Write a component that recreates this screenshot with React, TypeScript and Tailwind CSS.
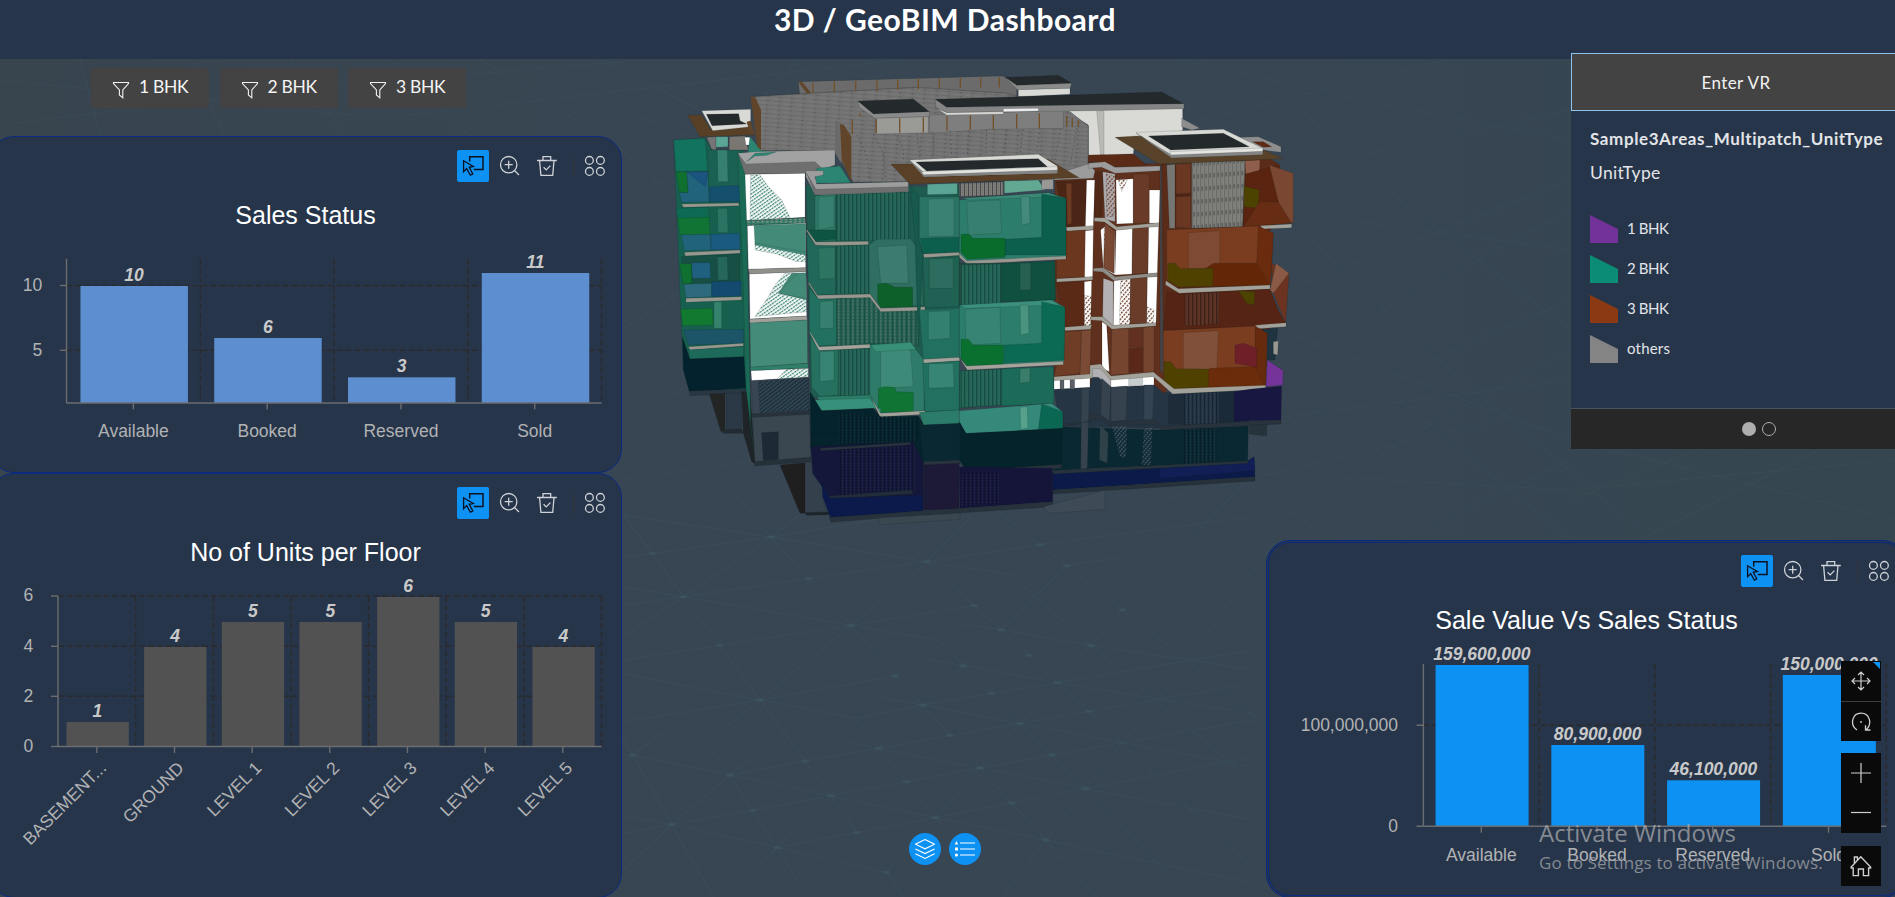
import type { ReactNode } from "react";

type Face = [fill: string, points: string];

/* ---------- 3D scene ---------- */

const gridLines = [
  "190,290 300,436 420,600 555,783 632,887 710,997 800,1117 850,1190",
  "-60,-60 10,45 97,160 190,290",
  "330,-40 453,111 565,236 693,376 827,528 908,615 990,706 1080,804 1175,909 1277,1020 1385,1140 1430,1190",
  "770,50 920,185 1063,317 1143,389 1226,466 1312,548 1407,634 1506,728 1600,820 1900,1110",
  "1130,30 1260,134 1340,197 1423,262 1508,330 1700,480 1960,700",
  "1063,40 920,185 693,376 420,600 262,727",
  "700,-80 453,111 190,290 -20,430",
  "1508,172 1340,197 1245,290 1143,389 1030,497 908,615 777,745 632,887 471,1043 340,1180",
  "1900,-80 1600,235 1508,330 1413,436 1312,548 1201,670 1080,804 947,953 800,1117",
  "1960,130 1600,620 1506,728 1398,866 1277,1020 1150,1190",
  "-20,670 420,600 827,528",
  "-20,485 300,436 693,376 1063,317",
  "-20,320 190,290 565,236 920,185 1260,134 1900,50",
  "-20,175 97,160 453,111 820,50",
  "-20,515 420,600 705,654 777,745 860,845 947,953 1050,1080",
  "-20,255 190,290 693,376 957,421 1030,497 1115,580 1201,670 1296,765 1398,866 1506,973 1700,1190",
  "10,45 453,111 920,185 1172,224 1245,290 1325,359 1413,436 1508,515 1900,850",
  "262,727 329,825 397,931 471,1043 550,1170",
  "0,700 38,765 95,866 155,973 222,1092 280,1190",
  "-20,1140 155,973 329,825 408,760",
  "-20,805 38,765 125,700",
  "38,765 329,825 632,887 947,953 1277,1020 1900,1150",
  "-20,940 155,973 471,1043 800,1117",
  "640,715 777,745 1080,804 1398,866 1900,960",
  "770,590 908,615 1201,670 1506,728 1900,800",
  "900,475 1030,497 1312,548 1600,595 1900,640",
  "1010,370 1143,389 1413,436 1900,510",
  "-20,1005 155,973 397,931 632,887 860,845 1080,804 1296,765 1506,728 1900,660",
  "329,825 555,783 777,745 990,706 1201,670 1407,634 1900,550",
  "705,654 908,615 1115,580 1312,548 1508,515 1900,450",
  "471,1043 710,997 947,953 1175,909 1398,866 1900,770",
];

const gridNodes = [
  [190, 290], [300, 436], [420, 600], [555, 783], [632, 887], [453, 111], [565, 236], [693, 376],
  [827, 528], [908, 615], [1080, 804], [1277, 1020], [920, 185], [1063, 317], [1143, 389], [1226, 466],
  [1312, 548], [1407, 634], [1260, 134], [1340, 197], [1030, 497], [1115, 580], [1201, 670], [1296, 765],
  [1398, 866], [777, 745], [947, 953], [1175, 909], [97, 160], [155, 973], [471, 1043], [800, 1117],
  [329, 825], [397, 931], [38, 765], [710, 997], [860, 845], [990, 706], [1413, 436], [1508, 330],
];

const farLines = [
  "0,80 380,118 900,60", "80,59 100,136", "190,59 225,136", "290,59 345,136", "390,59 470,136 622,270",
  "0,125 300,88 622,62", "480,59 622,150 780,290 900,390", "622,200 700,160 800,59", "622,330 760,240",
  "622,110 700,140 1000,170", "600,59 700,110", "1180,59 1360,100 1571,140", "1200,120 1450,59",
  "1260,300 1571,180", "1290,100 1400,200 1571,330", "1270,210 1571,250", "1250,380 1420,290 1571,210",
  "1240,450 1360,390 1571,300", "1300,230 1450,370 1640,530", "1260,420 1571,380", "1280,330 1571,440 1895,520",
  "1200,470 1571,490 1895,460", "1340,160 1571,110", "1250,540 1420,430 1571,350", "1400,540 1571,460",
  "1640,540 1820,449", "1571,500 1700,449", "622,420 700,380 640,350", "622,480 760,460", "1160,500 1500,420",
  "1230,470 1330,540", "1400,400 1571,540",
];

const leftWing: Face[] = [
  ["#17604f", "101,420 195,415 215,450 310,450 330,1170 148,1170 130,1110 118,840"],
  ["#12745e", "101,420 195,415 203,512 108,515"],
  ["#1b6153", "203,450 300,450 305,610 208,608"],
  ["#37806f", "232,450 262,450 264,545 234,545"],
  ["#0f7030", "108,515 140,515 145,578 118,575"],
  ["#22637c", "140,515 203,515 208,605 125,607 118,578 145,578"],
  ["#1c5480", "140,515 203,515 196,560"],
  ["#14506e", "208,560 300,556 303,605 208,605"],
  ["#999890", "125,612 296,609 298,617 130,622"],
  ["#0e6a52", "108,625 205,622 208,655 112,658"],
  ["#117434", "112,655 207,652 210,703 120,705"],
  ["#22637c", "125,705 210,703 213,750 133,752"],
  ["#1a5a80", "213,703 298,700 300,748 213,750"],
  ["#2b7463", "232,625 262,625 264,698 234,698"],
  ["#999890", "133,757 300,750 300,760 136,768"],
  ["#174f45", "125,770 300,762 300,850 130,850"],
  ["#0f7030", "118,790 155,792 155,850 130,852"],
  ["#1f5f80", "155,788 210,788 212,835 157,835"],
  ["#2d6a7d", "132,853 215,850 215,890 138,893"],
  ["#25685a", "232,770 262,770 264,840 234,840"],
  ["#144a70", "215,845 303,843 303,888 215,890"],
  ["#999890", "138,895 305,890 305,900 138,907"],
  ["#127a30", "122,928 217,925 220,975 128,977"],
  ["#1c5468", "130,990 310,988 310,1030 145,1035"],
  ["#35836c", "222,905 245,905 245,985 222,985"],
  ["#999890", "145,1040 310,1030 310,1038 150,1050"],
  ["#1e6a5a", "145,1050 310,1040 310,1070 148,1077"],
  ["#04222e", "127,1010 150,1077 312,1070 318,1165 148,1175 130,1110"],
  ["#2a3742", "148,1173 318,1167 320,1180 150,1187"],
  ["#232525", "208,1182 255,1180 255,1290 243,1295"],
  ["#2b3947", "258,1180 305,1180 305,1290 258,1290"],
  ["#232b33", "243,1290 305,1287 310,1300 250,1300"],
  ["#1f2428", "305,1175 330,1175 345,1390 335,1385 310,1300"],
];

const stair: Face[] = [
  ["#1a6a56", "293,460 318,515 332,1270 345,1390 318,1165 308,800"],
  ["#ffffff", "315,523 495,519 495,652 320,662"],
  ["url(#dither)", "332,525 360,525 385,560 425,600 450,652 330,661"],
  ["#2f7a66", "318,662 495,653 497,672 320,677"],
  ["url(#speck)", "318,662 495,653 497,668 320,674"],
  ["#ffffff", "322,677 497,670 497,803 325,808"],
  ["#448a79", "342,676 497,671 497,765 430,752 345,735"],
  ["url(#dither)", "345,728 430,745 497,755 497,785 470,785 410,762 345,750"],
  ["#8f9189", "325,808 498,803 498,815 328,822"],
  ["#ffffff", "328,822 498,815 500,948 330,957"],
  ["#448a79", "455,820 498,818 500,900 415,880"],
  ["url(#dither)", "435,820 470,822 415,880 500,895 500,935 345,950 385,890 405,855"],
  ["#a3a29a", "328,958 500,948 502,960 330,970"],
  ["#458b7a", "330,969 502,960 503,1090 332,1102"],
  ["#2f7f69", "330,1102 505,1090 505,1104 332,1112"],
  ["#ffffff", "333,1112 505,1105 505,1132 335,1142"],
  ["url(#dither)", "440,1108 505,1105 505,1130 410,1138"],
  ["#3a4553", "333,1142 505,1132 508,1232 340,1242"],
  ["url(#ditherDark)", "355,1145 505,1134 508,1230 360,1238"],
  ["#28323c", "335,1242 508,1232 508,1245 340,1255"],
  ["#3a4650", "338,1252 508,1243 512,1375 345,1388"],
  ["#1d2a36", "365,1298 415,1295 415,1378 370,1382"],
  ["#27313a", "340,1385 512,1372 512,1385 345,1398"],
  ["#201f1f", "420,1395 495,1388 495,1540 480,1540"],
  ["#34414d", "495,1388 515,1385 560,1535 495,1540"],
  ["#1d242a", "495,1538 565,1536 568,1544 500,1546"],
];

const frontBlock: Face[] = [
  ["#1d5c4e", "498,555 958,560 958,1240 512,1190"],
  ["#2d7867", "525,587 587,582 587,722 525,722"],
  ["#37806f", "535,592 582,588 582,680 535,690"],
  ["url(#slats)", "587,582 810,575 810,720 587,722"],
  ["#0d5442", "498,690 525,722 587,718 587,690"],
  ["#999890", "498,690 502,690 528,726 685,724 685,734 528,738"],
  ["#22685a", "500,700 525,735 587,738 587,883 530,885 505,850"],
  ["#2e7463", "535,745 585,742 585,835 538,838"],
  ["url(#slats)", "587,738 695,735 690,880 587,883"],
  ["#2f6f62", "687,735 710,718 812,717 848,765 848,915 722,925 688,880"],
  ["#3b7c6f", "712,740 800,735 805,850 722,850"],
  ["#0c6028", "713,852 740,850 765,862 818,862 818,920 722,922 713,905"],
  ["#999890", "504,848 508,848 532,886 690,882 722,925 855,920 855,932 720,937 688,893 535,897"],
  ["#227060", "508,865 535,898 590,897 590,1035 535,1037 508,1000"],
  ["#37806f", "540,905 580,902 580,985 540,985"],
  ["url(#slatsLight)", "590,895 690,893 722,935 835,932 835,1035 690,1030 590,1037"],
  ["#a5a49c", "508,995 512,998 538,1040 690,1033 690,1044 536,1052"],
  ["#25705f", "512,1010 538,1052 595,1050 595,1185 540,1190 515,1160"],
  ["#388473", "540,1055 582,1053 582,1140 540,1145"],
  ["url(#slats)", "595,1050 692,1045 692,1185 595,1187"],
  ["#2f7b69", "690,1035 812,1027 852,1080 852,1232 722,1240 690,1190"],
  ["#3d8a79", "722,1042 800,1035 812,1055 820,1160 722,1165"],
  ["#389079", "692,1035 812,1027 828,1048 708,1055"],
  ["#107435", "715,1165 735,1160 765,1162 768,1175 820,1177 820,1235 722,1237 715,1222"],
  ["#2b7c68", "530,1190 690,1185 700,1200 540,1203"],
  ["#37907a", "520,1200 690,1195 722,1240 722,1225 545,1232"],
  ["#05232c", "510,1175 545,1232 700,1225 722,1250 835,1248 852,1275 852,1395 820,1332 512,1345"],
  ["#05232c", "512,1300 850,1300 850,1345 545,1345"],
  ["#a5a49c", "692,1190 722,1240 855,1232 855,1243 720,1250"],
  ["#15173a", "512,1340 820,1325 850,1390 850,1490 570,1495 518,1420"],
  ["url(#slatsDark)", "595,1240 830,1255 830,1325 595,1335"],
  ["url(#slatsDark)", "600,1350 825,1335 825,1475 600,1485"],
  ["#28333d", "540,1345 810,1327 812,1334 542,1352"],
  ["#222c3a", "565,1488 815,1470 820,1482 570,1497"],
  ["#0b1a4a", "545,1450 570,1495 850,1485 850,1532 572,1555 548,1490"],
  ["#17594c", "810,555 838,590 838,720 850,770 835,1040 825,720"],
  ["#2a7464", "838,590 958,590 958,755 850,760 838,720"],
  ["#3a8174", "865,597 942,595 942,708 865,710"],
  ["#5aa593", "862,553 952,550 952,582 862,584"],
  ["#0d5f4d", "840,715 958,712 958,757 850,760"],
  ["#999890", "850,762 958,757 960,766 852,773"],
  ["#1f6152", "848,775 958,770 958,920 855,922"],
  ["#2d6d5f", "868,778 940,775 940,865 868,865"],
  ["#227060", "838,930 958,925 958,1072 850,1078"],
  ["#348070", "865,935 930,932 930,1015 865,1020"],
  ["#a5a49c", "850,1078 958,1072 960,1082 852,1090"],
  ["#22705f", "848,1090 958,1083 958,1230 855,1235"],
  ["#378574", "866,1092 940,1090 942,1162 866,1165"],
  ["#2b7c68", "838,1237 958,1230 958,1272 850,1275"],
  ["#0a2832", "835,1250 850,1275 958,1270 958,1382 850,1385"],
  ["#28333d", "850,1385 958,1380 960,1390 852,1395"],
  ["#1d1a38", "850,1395 958,1390 958,1528 850,1530"],
  ["#2c7d6b", "958,600 1225,578 1278,595 1278,775 978,785 958,760"],
  ["#3b8877", "965,595 1225,578 1260,590 985,600"],
  ["#378070", "980,605 1080,600 1085,700 985,705"],
  ["#0b5f4c", "1205,582 1278,595 1278,765 1095,765 1095,718 1205,712"],
  ["#448a7a", "1143,590 1168,590 1170,670 1145,675"],
  ["#0a6c2c", "963,703 985,702 1000,715 1095,715 1095,772 982,778 963,757"],
  ["#999890", "958,760 980,782 1278,768 1278,778 982,793 958,772"],
  ["#1e4c42", "958,790 1090,790 1085,915 958,920"],
  ["url(#slats)", "965,795 1085,792 1085,910 965,915"],
  ["#0f5040", "1085,790 1245,783 1247,900 1085,905"],
  ["#276050", "1140,790 1172,788 1172,870 1140,870"],
  ["#2c7d6b", "958,918 1235,900 1275,922 1272,1085 980,1098 958,1070"],
  ["#3a907c", "958,915 1235,900 1260,915 975,925"],
  ["#378472", "975,928 1080,922 1082,1030 978,1035"],
  ["#0b6a53", "1205,905 1275,922 1272,1080 1092,1088 1092,1035 1205,1030"],
  ["#4a937f", "1140,915 1165,915 1167,1000 1142,1005"],
  ["#0a7030", "963,1018 985,1018 1000,1035 1090,1035 1090,1092 982,1098 963,1075"],
  ["#a5a49c", "958,1073 980,1098 1270,1084 1270,1094 982,1110"],
  ["#1d5c4e", "960,1112 1090,1108 1085,1215 958,1225"],
  ["url(#slats)", "965,1112 1085,1108 1085,1215 965,1222"],
  ["#1b6b58", "1085,1106 1240,1100 1242,1210 1085,1218"],
  ["#3a7d6b", "1140,1106 1170,1104 1170,1145 1140,1150"],
  ["#35897a", "958,1232 1235,1210 1268,1235 1268,1285 978,1302 958,1265"],
  ["#0a6752", "1205,1212 1268,1235 1268,1285 1195,1288"],
  ["#56a08c", "1140,1222 1162,1220 1164,1285 1142,1288"],
  ["#04232a", "958,1265 978,1300 1267,1285 1265,1395 980,1412 958,1380"],
  ["#28333d", "958,1385 980,1412 1265,1393 1265,1405 982,1422"],
  ["#15153a", "958,1400 1238,1405 1238,1505 960,1525"],
  ["url(#slatsDark)", "965,1420 1078,1420 1078,1510 965,1518"],
  ["#27323c", "568,1552 958,1525 1238,1505 1238,1520 720,1555 572,1567"],
  ["#3a4650", "715,1553 960,1540 960,1558 718,1575"],
  ["#3e4a55", "1210,1520 1395,1470 1395,1528 1238,1540 1225,1538"],
];

const brownWing: Face[] = [
  ["#5f301d", "225,390 330,380 345,345 560,340 560,1030 222,1000"],
  ["#4b2616", "228,395 320,390 318,525 258,530"],
  ["#6d3a22", "258,400 275,400 275,520 262,525"],
  ["#ffffff", "320,390 345,390 340,530 316,533"],
  ["#a3a29a", "258,532 340,527 340,539 260,544"],
  ["#6b371f", "232,545 318,540 318,680 230,685"],
  ["#ffffff", "316,542 340,540 338,680 314,682"],
  ["#a3a29a", "230,686 338,680 338,690 230,696"],
  ["#5a2a17", "228,700 313,695 313,830 255,828"],
  ["#ffffff", "313,695 335,692 332,828 313,830"],
  ["url(#ditherBrown)", "313,735 335,740 332,828 313,830"],
  ["#a3a29a", "252,832 335,825 332,838 255,842"],
  ["#6f3c26", "255,845 305,842 300,970 222,980"],
  ["#7a4a34", "305,842 333,840 330,975 300,975"],
  ["#4f2818", "345,365 370,365 365,505 343,505"],
  ["#adabae", "368,365 405,372 405,515 375,508"],
  ["url(#ditherBrown)", "378,372 425,385 400,500 380,500"],
  ["#ffffff", "408,390 460,386 460,520 410,522"],
  ["url(#ditherBrown)", "415,390 442,390 425,425"],
  ["#683a27", "460,372 508,372 508,520 460,520"],
  ["#ffffff", "508,420 540,420 537,520 508,520"],
  ["#a3a29a", "343,503 375,503 410,530 537,518 537,531 408,541 373,516 343,514"],
  ["#ffffff", "362,540 374,530 405,545 405,675 370,655"],
  ["#7b4934", "375,520 405,545 402,670 370,655"],
  ["url(#ditherBrown)", "372,530 402,550 402,670 372,650"],
  ["#ffffff", "408,541 458,536 456,672 405,675"],
  ["#693b29", "458,536 506,532 504,670 456,672"],
  ["#ffffff", "506,532 536,530 532,670 504,672"],
  ["#8f8d88", "340,655 370,653 405,680 532,668 532,680 402,692 368,666 340,664"],
  ["#b4b1b5", "370,685 400,695 400,828 368,800"],
  ["#ffffff", "402,692 452,686 450,824 400,828"],
  ["url(#ditherBrown)", "422,692 452,688 450,824 418,826"],
  ["#693b29", "452,686 502,682 500,820 450,822"],
  ["#ffffff", "502,682 532,680 528,820 500,822"],
  ["url(#ditherBrown)", "500,770 522,780 520,820 500,820"],
  ["#a3a29a", "333,800 368,800 398,826 528,818 528,828 396,838 365,812 333,810"],
  ["#ffffff", "366,815 380,825 388,965 366,955"],
  ["#75452f", "396,838 522,830 522,965 392,975"],
  ["#613020", "446,836 490,834 490,890 446,892"],
  ["#5a2818", "446,895 490,892 490,965 446,968"],
  ["#454345", "540,345 560,345 560,985 540,960"],
  ["#5b2b19", "545,345 860,320 900,345 895,500 860,560 870,840 550,860"],
  ["#767672", "560,345 585,343 585,535 568,535"],
  ["#6a3722", "588,342 632,340 632,535 588,532"],
  ["#4e2516", "588,432 632,430 632,438 588,440"],
  ["#7f807c", "635,337 795,332 788,530 635,535"],
  ["url(#perf)", "638,337 795,332 788,530 638,535"],
  ["#8f5e4c", "795,332 840,330 838,372 797,372"],
  ["#5a2410", "797,372 895,345 895,455 838,460 790,530"],
  ["#7a4832", "868,345 940,370 940,520 895,500 895,455"],
  ["#4d4300", "792,408 838,420 835,475 792,470"],
  ["#662d14", "838,455 895,455 935,520 860,525 790,530"],
  ["#a3a29a", "840,527 935,522 935,533 850,537"],
  ["#7a3d20", "560,540 835,528 880,550 872,705 595,712 560,690"],
  ["#7e4a33", "625,548 720,542 720,652 625,658"],
  ["#6b2b0e", "835,530 880,550 872,700 830,640"],
  ["#632708", "595,712 700,640 830,640 872,705"],
  ["#4f4100", "563,640 585,640 602,656 700,655 698,708 598,712 563,692"],
  ["#a3a29a", "558,692 595,716 870,705 870,717 598,730 556,704"],
  ["#552414", "562,725 598,732 870,718 895,780 917,820 830,830 550,840"],
  ["#6b3320", "875,640 927,670 917,820 880,730"],
  ["#8a5a47", "870,720 888,640 927,670 880,730"],
  ["url(#slatsBrown)", "615,732 718,727 715,822 615,828"],
  ["#4d4300", "775,722 825,725 822,765 800,760"],
  ["#a3a29a", "825,826 918,818 918,830 835,836"],
  ["#1f3340", "845,838 893,835 885,930 860,930"],
  ["#9a9890", "880,875 895,873 893,915 880,912"],
  ["#7a3d20", "550,842 825,828 862,850 857,1008 582,1020 550,990"],
  ["#80503a", "610,848 715,842 710,968 610,970"],
  ["#662a0e", "825,830 862,850 857,1005 825,960"],
  ["#6a2c0a", "582,1020 690,955 825,950 857,1008"],
  ["#6e1f27", "765,885 790,880 830,895 830,952 765,940"],
  ["#4f4100", "552,935 572,935 588,956 685,957 685,1010 582,1018 552,992"],
  ["#74349a", "862,930 910,962 908,1005 858,1010"],
];

const podium: Face[] = [
  ["#263544", "222,265 330,260 335,225 365,235 392,260 522,255 550,278 808,265 808,375 545,385 240,378"],
  ["#ffffff", "222,240 330,233 330,262 222,268"],
  ["#5a6066", "240,240 252,240 252,268 240,268"],
  ["#5a6066", "270,238 284,238 284,266 270,266"],
  ["#b2b0b3", "335,198 360,200 393,240 393,262 355,232 335,232"],
  ["#ffffff", "393,238 522,228 522,255 393,262"],
  ["#c8cdcd", "446,235 488,232 488,256 446,258"],
  ["#a3a29a", "222,230 330,222 330,196 362,192 393,228 520,216 582,266 857,256 857,268 578,282 520,230 393,240 360,206 338,206 338,234 222,242"],
  ["#1f2d3a", "565,285 610,282 610,372 565,372"],
  ["url(#slatsDark)", "612,282 712,277 712,370 612,375"],
  ["#1b2a38", "718,278 760,276 760,365 718,368"],
  ["#181742", "762,275 808,268 905,258 903,360 808,362 762,365"],
  ["#0a2832", "240,380 540,390 805,378 803,485 335,505 220,512"],
  ["#36434f", "305,265 328,264 322,505 302,508"],
  ["#36434f", "365,235 393,260 388,365 362,345"],
  ["#36434f", "393,262 442,258 438,360 393,365"],
  ["#334352", "492,255 522,255 518,360 492,360"],
  ["#2f4149", "360,375 385,400 382,490 358,480"],
  ["url(#ditherGrey)", "395,378 442,376 438,475 420,470"],
  ["url(#ditherGrey)", "492,385 518,380 512,495 485,495"],
  ["url(#slatsDark)", "612,388 708,384 708,488 612,492"],
  ["#28333d", "250,370 330,366 330,343 360,343 390,368 518,358 545,378 903,360 903,372 545,390 518,372 388,378 360,356 250,380"],
  ["#27333c", "808,375 860,372 860,408 808,402"],
  ["#0b1a48", "218,520 800,485 822,470 825,530 218,570"],
  ["#111f56", "540,505 800,488 822,470 825,512 540,535"],
  ["#27333c", "220,512 805,482 805,490 222,522"],
  ["#26313b", "218,570 825,530 825,543 218,582"],
];

const roofs: Face[] = [
  ["#6b6b6b", "475,245 1085,228 1130,240 1130,290 480,290"],
  ["#24292c", "1095,232 1255,226 1295,250 1130,256"],
  ["#8a8a8a", "1095,232 1130,256 1295,250 1290,265 1133,270"],
  ["#d9dad5", "1135,269 1290,265 1290,283 1135,290"],
  ["#d9dad5", "1270,330 1628,325 1628,392 1485,412 1480,462 1345,470 1345,375"],
  ["#b9bab6", "1370,332 1392,332 1392,465 1382,465"],
  ["#737373", "332,290 830,262 1100,280 1290,335 1345,378 1345,498 1240,540 640,547 585,452 362,452"],
  ["url(#brick)", "332,290 830,262 1100,280 1290,335 1345,378 1345,498 1240,540 640,547 585,452 362,452"],
  ["#7e7e7e", "868,345 1270,330 1270,385 1050,388 868,400"],
  ["#24292c", "885,298 1565,276 1632,312 1365,315 920,322"],
  ["#858585", "885,298 920,322 1365,314 1632,311 1632,326 1360,332 920,338 888,322"],
  ["#d9dad5", "890,325 920,338 1090,335 1090,342 920,345"],
  ["#eeeeee", "1090,326 1195,325 1195,333 1090,335"],
  ["#24292c", "653,303 820,297 868,335 700,342"],
  ["#8a8a8a", "653,303 700,342 868,335 868,350 705,355 658,322"],
  ["#9a9a96", "708,355 865,350 865,398 708,402"],
  ["#574026", "143,345 185,345 212,388 325,380 345,405 180,410"],
  ["#d9dad5", "185,332 332,328 332,380 218,392"],
  ["#24292c", "199,343 296,341 300,362 320,372 216,377"],
  ["#757575", "200,412 228,410 228,450 215,448"],
  ["#5aa593", "228,410 264,410 264,440 228,442"],
  ["#7a7672", "268,410 315,408 325,450 268,450"],
  ["#ffffff", "314,412 330,412 330,435 318,435"],
  ["#2b8572", "330,410 365,452 408,455 320,485"],
  ["#a2a2a2", "293,460 345,455 585,450 585,495 545,510 525,490 318,500"],
  ["#2b8572", "320,485 345,460 408,456 380,466 345,468"],
  ["#6f6f6f", "293,460 318,492 525,485 548,507 500,520 315,522"],
  ["#2b8572", "530,505 600,498 632,548 525,550"],
  ["#9d9d9d", "498,512 550,512 550,525 525,530 530,552 805,545 805,575 525,585 498,530"],
  ["#6f6f6f", "500,520 528,568 805,560 805,575 525,585"],
  ["#807c78", "958,550 1090,545 1090,585 958,590"],
  ["url(#slatsDark)", "958,550 1090,545 1090,585 958,590"],
  ["#63a893", "1093,543 1195,540 1215,570 1093,580"],
  ["#9a9896", "1205,540 1240,538 1240,568 1205,568"],
  ["#9c9c9c", "1270,515 1345,492 1365,512 1360,535 1240,540"],
  ["#5a2a16", "1345,465 1480,462 1520,495 1420,500 1365,485 1345,490"],
  ["#9c9c9c", "1345,490 1395,485 1425,502 1560,498 1560,512 1425,520 1385,502 1345,505"],
  ["#5a4026", "752,492 815,492 1225,478 1318,533 810,553"],
  ["#d9dad5", "808,480 1195,463 1252,498 1252,520 852,530"],
  ["#858585", "808,480 852,518 1252,505 1252,520 852,530"],
  ["#e4e5e0", "845,515 1252,500 1252,510 850,524"],
  ["#24292c", "828,486 1195,476 1222,500 860,513"],
  ["#8d8d8d", "1625,355 1680,385 1655,390 1625,380"],
  ["#8d8d8d", "1800,412 1855,410 1923,440 1923,457 1870,450"],
  ["#5e2a14", "1838,425 1870,425 1895,440 1870,442"],
  ["#584229", "1425,412 1490,408 1870,450 1932,476 1560,492 1545,485"],
  ["#d9dad5", "1488,397 1750,388 1868,445 1868,462 1595,472"],
  ["#858585", "1488,400 1590,462 1868,452 1868,464 1595,474"],
  ["#e4e5e0", "1590,455 1868,444 1868,454 1592,465"],
  ["#24292c", "1525,408 1750,400 1828,440 1592,450"],
];

const posts = [
  [519, 248, 280], [583, 244, 277], [647, 243, 274], [711, 240, 272], [773, 238, 270], [835, 236, 268],
  [898, 235, 266], [961, 234, 264], [1022, 232, 262], [1078, 232, 262], [637, 358, 402], [660, 340, 350],
  [709, 358, 400], [779, 355, 398], [850, 352, 397], [921, 348, 392], [991, 346, 390], [1060, 345, 388],
  [1130, 342, 386], [1198, 340, 384], [1280, 348, 380], [1297, 355, 382], [1315, 360, 378],
];

function Faces({ items }: { items: Face[] }) {
  return (
    <g stroke="#0b1a1c" strokeOpacity="0.22" strokeWidth="2">
      {items.map(([fill, points], i) => (
        <polygon key={i} fill={fill} points={points} />
      ))}
    </g>
  );
}

function Scene() {
  return (
    <svg className="absolute inset-0 h-full w-full" viewBox="0 0 1895 897" preserveAspectRatio="none" aria-hidden="true">
      <defs>
        <pattern id="dither" width="9" height="9" patternUnits="userSpaceOnUse" patternTransform="rotate(-35)">
          <rect width="7" height="4" fill="#3f8674" />
        </pattern>
        <pattern id="ditherDark" width="9" height="9" patternUnits="userSpaceOnUse" patternTransform="rotate(-38)">
          <rect width="8" height="4" fill="#0c2c35" />
        </pattern>
        <pattern id="ditherBrown" width="9" height="10" patternUnits="userSpaceOnUse" patternTransform="rotate(-50)">
          <rect width="6" height="4" fill="#74452f" />
        </pattern>
        <pattern id="ditherGrey" width="8" height="9" patternUnits="userSpaceOnUse" patternTransform="rotate(-50)">
          <rect width="6" height="4" fill="#4b5a68" />
        </pattern>
        <pattern id="speck" width="14" height="8" patternUnits="userSpaceOnUse">
          <rect width="8" height="4" fill="#8f9189" />
        </pattern>
        <pattern id="slats" width="12" height="20" patternUnits="userSpaceOnUse">
          <rect width="12" height="20" fill="#27675a" />
          <rect width="4" height="20" fill="#164d42" />
        </pattern>
        <pattern id="slatsLight" width="14" height="10" patternUnits="userSpaceOnUse">
          <rect width="14" height="10" fill="#256053" />
          <rect width="4" height="10" fill="#184f44" />
          <rect x="7" width="2.5" height="7" fill="#8f9189" fillOpacity="0.7" />
        </pattern>
        <pattern id="slatsDark" width="12" height="9" patternUnits="userSpaceOnUse">
          <rect width="3" height="9" fill="#0a1420" fillOpacity="0.5" />
          <rect x="6" width="2" height="5" fill="#45566a" fillOpacity="0.45" />
        </pattern>
        <pattern id="slatsBrown" width="12" height="10" patternUnits="userSpaceOnUse">
          <rect width="12" height="10" fill="#5c3426" />
          <rect width="4" height="10" fill="#3c1f16" />
        </pattern>
        <pattern id="perf" width="12" height="38" patternUnits="userSpaceOnUse" patternTransform="skewY(-4)">
          <rect width="3" height="38" fill="#6b6c68" />
          <rect x="5" width="3.5" height="13" fill="#4c4e4c" />
        </pattern>
        <pattern id="brick" width="36" height="13" patternUnits="userSpaceOnUse" patternTransform="rotate(4)">
          <rect width="36" height="2" fill="#6a6a6a" />
          <rect x="5" width="5" height="3.5" fill="#575757" />
          <rect x="22" y="7" width="14" height="2" fill="#7e7e7e" />
        </pattern>
        <linearGradient id="ground" x1="0" y1="0" x2="1" y2="0">
          <stop offset="0" stopColor="#38454f" />
          <stop offset="0.35" stopColor="#384653" />
          <stop offset="1" stopColor="#364651" />
        </linearGradient>
      </defs>
      <rect width="1895" height="897" fill="url(#ground)" />
      <g fill="none" stroke="#3e525d" strokeOpacity="0.38" strokeWidth="1.2">
        {farLines.map((points) => (
          <polyline key={points} points={points} />
        ))}
      </g>
      <g transform="translate(620 500) scale(.33333)">
        <g fill="none" stroke="#3f5561" strokeOpacity="0.34" strokeWidth="4">
          {gridLines.map((points) => (
            <polyline key={points} points={points} />
          ))}
        </g>
        {gridNodes.map(([x, y]) => (
          <ellipse key={`${x}-${y}`} cx={x} cy={y} rx="12" ry="5" fill="#40606c" fillOpacity="0.4" />
        ))}
      </g>
      <g transform="translate(640 0) scale(.33333)">
        <Faces items={leftWing} />
        <g transform="translate(1020 150)">
          <Faces items={brownWing} />
        </g>
        <g transform="translate(1020 900)">
          <Faces items={podium} />
        </g>
        <Faces items={stair} />
        <Faces items={frontBlock} />
        <Faces items={roofs} />
        <g stroke="#73512b" strokeWidth="4">
          {posts.map(([x, y1, y2]) => (
            <line key={`${x}-${y1}`} x1={x} x2={x} y1={y1} y2={y2} />
          ))}
        </g>
        <g fill="#60452a">
          <polygon points="475,245 486,245 514,280 500,280" />
          <polygon points="332,290 345,290 363,330 363,450 352,440" />
          <polygon points="600,372 612,375 634,410 634,545 605,480" />
          <polygon points="585,360 598,370 603,490 586,460" fill="#6a6a6a" />
          <polygon points="320,365 332,362 345,405 330,400" />
        </g>
        <g stroke="#4f4f4f" strokeWidth="3" strokeDasharray="4 9" fill="none">
          <path d="M650 405Q690 470 686 540M700 405Q740 460 736 540M765 402Q795 440 790 480M830 402L840 475M875 395Q885 430 880 470M930 392L935 468M985 392L982 468M1040 390L1038 466M1100 390L1092 464M1148 388L1140 462M1200 386L1190 460M1262 386L1245 480M1310 384L1290 500" />
        </g>
      </g>
    </svg>
  );
}

/* ---------- icons ---------- */

function SelectIcon() {
  return (
    <svg className="h-8 w-8" viewBox="0 0 32 32" fill="none" stroke="#0b1220" strokeWidth="1.5">
      <path d="M12.7 11.5V6.7H26V19.5H16.8" />
      <path d="M6.6 10.8V21.6L9.7 18.6L13.4 25.2L15.8 23.9L12.3 17.3L16.3 16.5Z" strokeWidth="1.3" />
    </svg>
  );
}

function ZoomIcon() {
  return (
    <svg className="h-8 w-8" viewBox="0 0 32 32" fill="none" stroke="#cfd3d8" strokeWidth="1.3">
      <circle cx="15.7" cy="14.7" r="8.2" />
      <path d="M15.7 10.7V18.7M11.7 14.7H19.7M21.5 20.5L26 25" />
    </svg>
  );
}

function TrashIcon() {
  return (
    <svg className="h-8 w-8" viewBox="0 0 32 32" fill="none" stroke="#cfd3d8" strokeWidth="1.3">
      <path d="M6 10.5H25.8M12 10.3V6.6H19.7V10.3M8.6 10.8L9.9 25.4H21.7L23 10.8" />
      <path d="M12.6 17.3L15.2 19.9L19.4 15.6" />
    </svg>
  );
}

function GridIcon() {
  return (
    <svg className="h-8 w-8" viewBox="0 0 32 32" fill="none" stroke="#cfd3d8" strokeWidth="1.3">
      <circle cx="10.4" cy="10.4" r="3.9" />
      <circle cx="21.4" cy="10.4" r="3.9" />
      <circle cx="10.4" cy="21.4" r="3.9" />
      <circle cx="21.4" cy="21.4" r="3.9" />
    </svg>
  );
}

function FunnelIcon() {
  return (
    <svg className="h-[18px] w-[18px]" viewBox="0 0 18 18" fill="none" stroke="#f2f2f2" strokeWidth="1.1">
      <path d="M1.5 1.5H16.5V2.6L10.8 9V16.8L7.4 14V9L1.5 2.6Z" />
    </svg>
  );
}

/* ---------- charts ---------- */

interface ChartProps {
  view: [x: number, y: number, w: number, h: number];
  x0: number;
  x1: number;
  top: number;
  base: number;
  barWidth: number;
  color: string;
  tickLeft: number;
  labelRight: number;
  labelY: number;
  rotate?: boolean;
  yTicks: { y: number; label: string; grid?: boolean }[];
  bars: { label: string; value: string; y: number }[];
}

function BarChart(p: ChartProps) {
  const band = (p.x1 - p.x0) / p.bars.length;
  return (
    <svg
      width={p.view[2]}
      height={p.view[3]}
      viewBox={p.view.join(" ")}
      className="block shrink-0 font-['Liberation_Sans',Arial,sans-serif] text-[17.5px]"
    >
      <g stroke="#2b2b2d" strokeWidth="1.4" strokeDasharray="6 3">
        {p.yTicks.filter((t) => t.grid).map((t) => (
          <line key={t.label} x1={p.x0} x2={p.x1} y1={t.y} y2={t.y} />
        ))}
        {p.bars.map((b, i) => (
          <line key={b.label} x1={p.x0 + band * (i + 1)} x2={p.x0 + band * (i + 1)} y1={p.top} y2={p.base} />
        ))}
      </g>
      {p.bars.map((b, i) => (
        <rect key={b.label} x={p.x0 + band * (i + 0.5) - p.barWidth / 2 + 0.8} y={b.y} width={p.barWidth} height={p.base - b.y} fill={p.color} />
      ))}
      <g stroke="#6b6d70" strokeWidth="1.4">
        <line x1={p.x0} x2={p.x0} y1={p.top} y2={p.base} />
        <line x1={p.x0} x2={p.x1} y1={p.base} y2={p.base} />
        {p.yTicks.map((t) => (
          <line key={t.label} x1={p.tickLeft} x2={p.x0} y1={t.y} y2={t.y} />
        ))}
        {p.bars.map((b, i) => (
          <line key={b.label} x1={p.x0 + band * (i + 0.5)} x2={p.x0 + band * (i + 0.5)} y1={p.base} y2={p.base + 6.5} />
        ))}
      </g>
      <g fill="#b1b2b4">
        {p.yTicks.map((t) => (
          <text key={t.label} x={p.labelRight} y={t.y + 5.2} textAnchor="end">
            {t.label}
          </text>
        ))}
        {p.bars.map((b, i) => {
          const cx = p.x0 + band * (i + 0.5);
          return p.rotate ? (
            <text key={b.label} textAnchor="end" transform={`translate(${cx + 10.5} ${p.labelY}) rotate(-45)`}>
              {b.label}
            </text>
          ) : (
            <text key={b.label} x={cx} y={p.labelY} textAnchor="middle">
              {b.label}
            </text>
          );
        })}
      </g>
      <g fill="#c9c9c9" fontWeight="bold" fontStyle="italic">
        {p.bars.map((b, i) => (
          <text key={b.label} x={p.x0 + band * (i + 0.5) + 0.6} y={b.y - 5.3} textAnchor="middle">
            {b.value}
          </text>
        ))}
      </g>
    </svg>
  );
}

function Panel({ title, className, bar, children }: { title: string; className: string; bar: string; children: ReactNode }) {
  return (
    <section className={`flex shrink-0 flex-col overflow-hidden rounded-[24px] border-[#0b2a80] bg-[#26354a] ${className}`}>
      <div className={`flex h-8 items-center justify-end ${bar}`}>
        <button className="h-8 w-8 rounded-[2px] bg-[#0d91f2]"><SelectIcon /></button>
        <button className="ml-1"><ZoomIcon /></button>
        <button className="ml-1.5"><TrashIcon /></button>
        <span className="ml-2.5 h-5 w-px bg-[#303338]" />
        <button className="ml-[5px]"><GridIcon /></button>
      </div>
      <h2 className="mt-[18px] h-[30px] text-center font-['Liberation_Sans',Arial,sans-serif] text-[25px] leading-[30px] text-white">
        {title}
      </h2>
      {children}
    </section>
  );
}

/* ---------- page ---------- */

const legend = [
  { label: "1 BHK", color: "#73319a" },
  { label: "2 BHK", color: "#0b8c76" },
  { label: "3 BHK", color: "#8b3912" },
  { label: "others", color: "#848484" },
];

function LegendPanel() {
  return (
    <aside className="relative -mt-1.5 -mr-1.5 flex h-[396px] w-[330px] shrink-0 flex-col self-end bg-[#26354a] text-[#e2e4e7]">
      <button className="h-[58px] border border-[#8ec5ef] bg-[#434343] pt-0.5 text-[17px] tracking-[0.4px] text-[#f2f2f2]">Enter VR</button>
      <div className="flex grow flex-col px-[19px] pt-4">
        <h3 className="h-6 text-[17px] leading-6 font-bold tracking-[0.6px] whitespace-nowrap">Sample3Areas_Multipatch_UnitType</h3>
        <p className="mt-2.5 text-[17.5px] leading-6 tracking-[0.3px]">UnitType</p>
        <ul className="mt-[30px] flex flex-col gap-3">
          {legend.map((item) => (
            <li key={item.label} className="flex h-7 items-center gap-[9px] text-[15px] leading-none">
              <svg className="h-7 w-7" viewBox="0 0 28 28">
                <path d="M0 0L28 14V28H0Z" fill={item.color} />
              </svg>
              <span className={item.label === "others" ? "-mt-0.5 tracking-[0.2px]" : "-mt-0.5 tracking-[-0.4px]"}>{item.label}</span>
            </li>
          ))}
        </ul>
      </div>
      <footer className="flex h-[41px] items-center justify-center gap-1.5 border-t border-[#4b5561] bg-[#272727] pl-[46px]">
        <span className="h-3.5 w-3.5 rounded-full bg-[#aeaeae]" />
        <span className="h-3.5 w-3.5 rounded-full border border-[#aeaeae]" />
      </footer>
    </aside>
  );
}

function NavControls() {
  const button = "flex h-10 w-10 items-center justify-center bg-[#0a0a0b]";
  return (
    <div className="absolute top-[661px] left-[1841px] flex flex-col">
      <button className="relative flex h-[41px] w-10 items-center justify-center border-b border-[#3c3c3c] bg-[#0a0a0b]">
        <svg className="h-5 w-5" viewBox="0 0 20 20" fill="none" stroke="#cfcfcf" strokeWidth="1.2">
          <path d="M10 1V19M1 10H19M7 4L10 1L13 4M7 16L10 19L13 16M4 7L1 10L4 13M16 7L19 10L16 13" />
        </svg>
        <svg className="absolute top-px right-px h-[7px] w-[7px]" viewBox="0 0 7 7">
          <path d="M0 0H7V7Z" fill="#0d91f2" />
        </svg>
      </button>
      <button className="flex h-[39px] w-10 items-center justify-center bg-[#0a0a0b]">
        <svg className="h-5 w-5" viewBox="0 0 20 20" fill="none" stroke="#cfcfcf" strokeWidth="1.3">
          <path d="M6 18C-1.5 13 1 1.2 10 1.2C19 1.2 21.5 12 15 18M14.5 13.2V18H19.5" />
          <circle cx="10" cy="10" r="0.9" fill="#cfcfcf" stroke="none" />
        </svg>
      </button>
      <button className={`mt-3 ${button}`}>
        <svg className="h-5 w-5" viewBox="0 0 20 20" stroke="#cfcfcf" strokeWidth="1.2">
          <path d="M10 0V20M0 10H20" />
        </svg>
      </button>
      <button className={button}>
        <svg className="h-5 w-5" viewBox="0 0 20 20" stroke="#cfcfcf" strokeWidth="1.2">
          <path d="M0 9.5H20" />
        </svg>
      </button>
      <button className={`mt-[13px] ${button}`}>
        <svg className="h-[22px] w-[22px]" viewBox="0 0 22 22" fill="none" stroke="#cfcfcf" strokeWidth="1.4">
          <path d="M1.2 12L10.8 1.8L20.6 12V13H18.6V20.6H13.4V14H8.4V20.6H3.2V13H1.2ZM4.4 8V2H7.4V5" />
        </svg>
      </button>
    </div>
  );
}

export default function App() {
  return (
    <div className="relative h-[897px] w-[1895px] overflow-hidden bg-[#384551] font-[Lato,'Open_Sans',sans-serif]">
      <Scene />
      <div className="relative flex h-full flex-col">
        <header className="flex h-[59px] shrink-0 justify-center bg-[#26354a]">
          <h1 className="-mt-px -ml-[5px] h-10 text-[30px] leading-10 font-bold tracking-[0.45px] whitespace-nowrap text-white">3D / GeoBIM Dashboard</h1>
        </header>
        <div className="flex min-h-0 grow">
          <div className="flex w-[622px] shrink-0 flex-col">
            <div className="mb-7 ml-[91px] flex gap-[10.5px] pt-[9px]">
              {["1 BHK", "2 BHK", "3 BHK"].map((label) => (
                <button key={label} className="flex h-10 w-[118px] items-center rounded-[2px] bg-[#434343] pl-[21px] text-[17.5px] tracking-[-0.3px] text-[#f5f5f5]">
                  <span className="mt-[3px]"><FunnelIcon /></span>
                  <span className="-mt-0.5 ml-[9px]">{label}</span>
                </button>
              ))}
            </div>
            <Panel title="Sales Status" className="-ml-2.5 h-[337px] w-[632px] border pt-[13px] pr-2.5 pl-[9px]" bar="">
              <BarChart
                view={[0, 230, 612, 230]}
                x0={66.5} x1={601.6} top={258.7} base={403} barWidth={107.5} color="#5d8ed0"
                tickLeft={60} labelRight={42.3} labelY={436.7}
                yTicks={[{ y: 285.5, label: "10", grid: true }, { y: 350.3, label: "5", grid: true }]}
                bars={[
                  { label: "Available", value: "10", y: 286 },
                  { label: "Booked", value: "6", y: 338 },
                  { label: "Reserved", value: "3", y: 377.3 },
                  { label: "Sold", value: "11", y: 273 },
                ]}
              />
            </Panel>
            <Panel title="No of Units per Floor" className="-ml-2.5 h-[425px] w-[632px] border pt-[13px] pr-2.5 pl-[9px]" bar="">
              <BarChart
                view={[0, 567, 612, 310]}
                x0={58} x1={601.6} top={596} base={746.5} barWidth={62.3} color="#525252"
                tickLeft={51} labelRight={33.3} labelY={769} rotate
                yTicks={[
                  { y: 596, label: "6", grid: true },
                  { y: 646.3, label: "4", grid: true },
                  { y: 696.3, label: "2", grid: true },
                  { y: 746.5, label: "0" },
                ]}
                bars={[
                  { label: "BASEMENT...", value: "1", y: 722 },
                  { label: "GROUND", value: "4", y: 647 },
                  { label: "LEVEL 1", value: "5", y: 622 },
                  { label: "LEVEL 2", value: "5", y: 622 },
                  { label: "LEVEL 3", value: "6", y: 597 },
                  { label: "LEVEL 4", value: "5", y: 622 },
                  { label: "LEVEL 5", value: "4", y: 647 },
                ]}
              />
            </Panel>
          </div>
          <div className="flex grow items-end justify-center gap-2 pb-8 pl-[2px]">
            <button className="flex h-8 w-8 items-center justify-center rounded-full bg-[#0d91f2]">
              <svg className="h-5 w-5" viewBox="0 0 20 20" fill="none" stroke="#fff" strokeWidth="1.1">
                <path d="M10 .6L19.6 5.2L10 9.8L.4 5.2ZM.4 10L10 14.6L19.6 10M.4 14.8L10 19.4L19.6 14.8" />
              </svg>
            </button>
            <button className="flex h-8 w-8 items-center justify-center rounded-full bg-[#0d91f2]">
              <svg className="h-5 w-5" viewBox="0 0 20 20" fill="#fff">
                <path d="M5 3.5H20V4.5H5ZM5 9.5H20V10.5H5ZM5 15.5H20V16.5H5ZM1.5 2L3.2 5.5H-.2ZM0 8.5H3V11.5H0Z" />
                <circle cx="1.5" cy="16" r="1.6" />
              </svg>
            </button>
          </div>
          <div className="flex w-[629px] shrink-0 flex-col">
            <LegendPanel />
            <Panel title="Sale Value Vs Sales Status" className="mt-[91px] -mr-3 h-[358px] w-[641px] border-[3px] border-double pt-3" bar="mr-[9px]">
              <BarChart
                view={[1269, 635, 626, 250]}
                x0={1423.4} x1={1886.4} top={664} base={826.3} barWidth={93} color="#0d91f2"
                tickLeft={1416.5} labelRight={1398} labelY={860.7}
                yTicks={[{ y: 725.3, label: "100,000,000", grid: true }, { y: 826.3, label: "0" }]}
                bars={[
                  { label: "Available", value: "159,600,000", y: 665 },
                  { label: "Booked", value: "80,900,000", y: 745 },
                  { label: "Reserved", value: "46,100,000", y: 780.3 },
                  { label: "Sold", value: "150,000,000", y: 675 },
                ]}
              />
            </Panel>
          </div>
        </div>
      </div>
      <div className="pointer-events-none absolute top-[817px] left-[1539px] font-['Open_Sans','Noto_Sans',sans-serif] whitespace-nowrap text-[#a6a8ab]/75">
        <p className="text-[24px] leading-8">Activate Windows</p>
        <p className="text-[17px] leading-7 tracking-[0.15px]">Go to Settings to activate Windows.</p>
      </div>
      <NavControls />
    </div>
  );
}
